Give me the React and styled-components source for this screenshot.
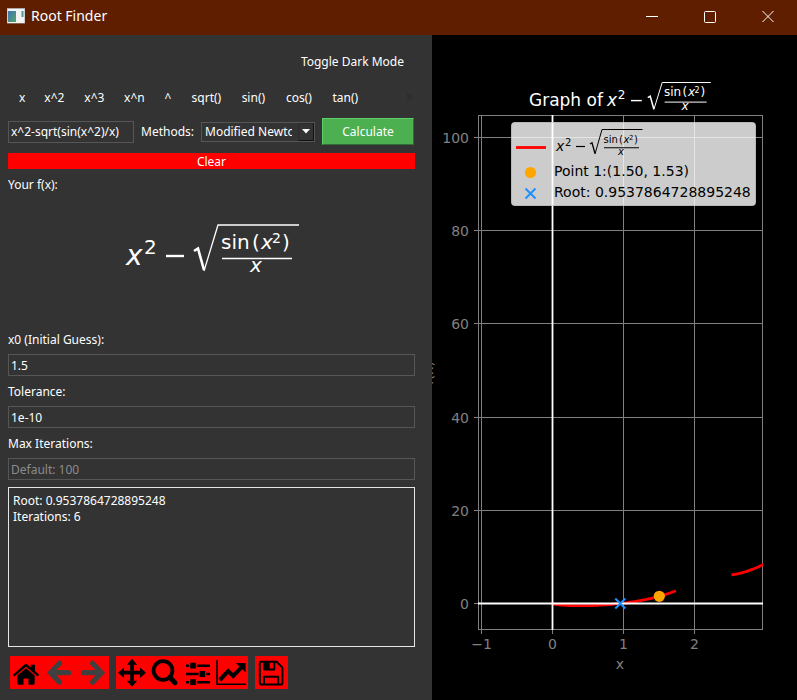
import React, { useState } from "react";
import styled, { createGlobalStyle } from "styled-components";

const GlobalStyle = createGlobalStyle`
  * { box-sizing: border-box; }
  html, body, #root { height: 100%; }
  body {
    margin: 0;
    background: #000;
    color: #fff;
    font: 12px/18px "Noto Sans", "Open Sans", sans-serif;
  }
  button, input, select, textarea { font: inherit; color: inherit; }
`;

const Window = styled.div`
  min-height: 100%;
  display: flex;
  flex-direction: column;
`;

const TitleBar = styled.header`
  height: 35px;
  flex: none;
  display: flex;
  align-items: center;
  background: #601e00;
  padding: 0 0 3px 7px;
`;

const AppName = styled.h1`
  flex: 1;
  margin: 0 0 0 6px;
  font-size: 14px;
  line-height: 20px;
  font-weight: 400;
`;

const CaptionButton = styled.button`
  width: 58px;
  height: 32px;
  padding: 0;
  border: 0;
  background: none;
  display: grid;
  place-items: center;
`;

const Body = styled.main`
  flex: 1;
  display: grid;
  grid-template-columns: 432fr 365fr;
`;

const Panel = styled.form`
  min-width: 0;
  background: #333;
  padding: 17px 17px 11px 8px;
  display: flex;
  flex-direction: column;
`;

const ToggleRow = styled.div`
  display: flex;
  justify-content: flex-end;
  padding-right: 11px;
`;

const FlatButton = styled.button`
  min-width: ${(p) => p.$width || 0}px;
  border: 0;
  padding: 0;
  background: none;
  line-height: 20px;
  white-space: nowrap;
`;

const FunctionRow = styled.div`
  display: flex;
  gap: 18px;
  margin-top: 16px;
  padding: 0 2px 0 11px;
`;

const More = styled.span`
  margin-left: auto;
  color: #2b2b2b;
  font-size: 14px;
  line-height: 16px;
`;

const EntryRow = styled.div`
  display: flex;
  align-items: center;
  gap: 7px;
  margin-top: 10px;
`;

const TextInput = styled.input`
  width: 100%;
  height: 22px;
  padding: 0 2px;
  border: 1px solid #565656;
  border-radius: 0;
  background: #333;
  outline: 0;
  &::placeholder { color: #8c8c8c; opacity: 1; }
`;

const ExpressionInput = styled(TextInput)`
  flex: 1;
  min-width: 0;
`;

const MethodLabel = styled.label`
  width: 53px;
`;

const SelectBox = styled.div`
  position: relative;
  width: 114px;
  height: 20px;
`;

const Select = styled.select`
  appearance: none;
  display: block;
  width: 100%;
  height: 100%;
  padding: 0 22px 0 3px;
  border: 1px solid #565656;
  border-radius: 0;
  background: #333;
  outline: 0;
`;

const SelectArrow = styled.span`
  position: absolute;
  top: 1px;
  right: 1px;
  width: 16px;
  height: 18px;
  display: grid;
  place-items: center;
  pointer-events: none;
  border: 1px solid;
  border-color: #2b2b2b #111 #111 #2b2b2b;
`;

const CalculateButton = styled.button`
  width: 92px;
  height: 27px;
  margin-right: 1px;
  padding: 0;
  border: 1px solid;
  border-color: #5fd068 #2f6f33 #2f6f33 #5fd068;
  background: #4caf50;
`;

const ClearButton = styled.button`
  height: 16px;
  margin: 8px 0 7px;
  padding: 1px 0 0;
  border: 0;
  background: #f00;
  line-height: 15px;
`;

const Preview = styled.figure`
  margin: 0;
  flex: none;
  height: 137px;
  display: flex;
  justify-content: center;
  padding-top: 24px;
`;

const FieldLabel = styled.label`
  display: block;
  margin-bottom: 5px;
`;

const Field = styled.div`
  margin-bottom: 7px;
`;

const Output = styled.textarea`
  display: block;
  flex: 1;
  min-height: 80px;
  width: 100%;
  padding: 5px 4px 4px;
  border: 1px solid #e6e6e6;
  border-radius: 0;
  background: #333;
  line-height: 16px;
  resize: none;
  outline: 0;
`;

const Toolbar = styled.div`
  display: flex;
  gap: 7px;
  margin: 9px 0 0 2px;
`;

const ToolGroup = styled.div`
  display: flex;
  background: #f00;
`;

const ToolButton = styled.button`
  width: 33px;
  height: 33px;
  padding: 0;
  border: 0;
  background: none;
  color: ${(p) => (p.disabled ? "#404040" : "#000")};
  svg { display: block; }
`;

const PlotPanel = styled.section`
  min-width: 0;
  overflow: hidden;
`;

const PlotSvg = styled.svg`
  display: block;
  width: 100%;
  overflow: hidden;
  font-family: "DejaVu Sans", sans-serif;
`;

const MathGroup = styled.g`
  font-family: "DejaVu Sans", sans-serif;
`;

/* x^2 - sqrt(sin(x^2)/x), with the baseline of the leading x at (x, y) */
function Formula({ x, y, k, color, bar = 40 * k }) {
  const main = Math.round(28 * k);
  const mid = Math.round(20 * k);
  const small = Math.round(14 * k);
  const px = (v) => x + v * k;
  const py = (v) => y + v * k;
  return (
    <MathGroup fill={color} stroke="none">
      <text x={px(0)} y={y} fontSize={main} fontStyle="italic">x</text>
      <text x={px(18)} y={py(-11)} fontSize={mid}>2</text>
      <path d={`M${px(40)} ${py(-9)}H${px(58)}`} stroke={color} strokeWidth={Math.max(1.2, 2.4 * k)} />
      <path
        d={`M${px(68)} ${py(-14)}L${px(72)} ${py(-16.5)}L${px(78)} ${py(5)}`}
        fill="none" stroke={color} strokeWidth={Math.max(1.3, 2.6 * k)}
      />
      <path
        d={`M${px(78)} ${py(6)}L${px(92)} ${y - bar}H${px(173)}`}
        fill="none" stroke={color} strokeWidth={Math.max(1, 1.3 * k)}
      />
      <text x={px(95)} y={py(-16)} fontSize={mid}>sin</text>
      <text x={px(126)} y={py(-16)} fontSize={mid}>(</text>
      <text x={px(135)} y={py(-16)} fontSize={mid} fontStyle="italic">x</text>
      <text x={px(146)} y={py(-22)} fontSize={small}>2</text>
      <text x={px(156)} y={py(-16)} fontSize={mid}>)</text>
      <path d={`M${px(96)} ${py(-6.5)}H${px(166)}`} stroke={color} strokeWidth={Math.max(1, 1.4 * k)} />
      <text x={px(124)} y={py(7)} fontSize={mid} fontStyle="italic">x</text>
    </MathGroup>
  );
}

const toX = (v) => 120.5 + 71 * v;
const toY = (v) => 568.5 - 4.66 * v;
const f = (v) => v * v - Math.sqrt(Math.max(0, Math.sin(v * v) / v));

function curve(from, to) {
  const points = [];
  for (let i = 0; i <= 60; i++) {
    const v = from + ((to - from) * i) / 60;
    points.push(`${toX(v).toFixed(2)},${toY(f(v)).toFixed(2)}`);
  }
  return points.join(" ");
}

const cross = (x, y) => `M${x - 5} ${y - 5}l10 10M${x + 5} ${y - 5}l-10 10`;

const xTicks = [[49.5, "−1"], [120.5, "0"], [191.5, "1"], [262.5, "2"]];
const yTicks = [[568.5, "0"], [475.5, "20"], [382.5, "40"], [288.5, "60"], [195.5, "80"], [102.5, "100"]];

function Plot() {
  return (
    <PlotSvg viewBox="0 0 365 665" role="img" aria-label="Graph of the function">
      <clipPath id="axes"><rect x="46" y="80" width="285" height="515" /></clipPath>
      <g stroke="#808080" fill="none">
        {xTicks.map(([x]) => <path key={x} d={`M${x} 80.5V599`} />)}
        {yTicks.map(([y]) => <path key={y} d={`M42 ${y}H330.5`} />)}
        <rect x="46.5" y="80.5" width="284" height="514" />
      </g>
      <g clipPath="url(#axes)" fill="none">
        <g stroke="#f00" strokeWidth="2.8" strokeLinecap="square">
          <polyline points={curve(0.01, 1.72)} />
          <polyline points={curve(2.54, 3.05)} />
        </g>
        <path d="M46 568.5H331M120.5 80V595" stroke="#fff" strokeWidth="1.8" />
      </g>
      <circle cx="227.3" cy="561.3" r="5.6" fill="#ffa500" />
      <path d={cross(188.3, 568.5)} stroke="#1e90ff" strokeWidth="2" />
      <g fill="#808080" fontSize="14">
        {xTicks.map(([x, t]) => <text key={t} x={x} y="614" textAnchor="middle">{t}</text>)}
        {yTicks.map(([y, t]) => <text key={t} x="37" y={y + 5} textAnchor="end">{t}</text>)}
        <text x="188" y="634" textAnchor="middle">x</text>
        <text transform="translate(1 338) rotate(-90)" textAnchor="middle">f(x)</text>
      </g>
      <text x="97" y="71" fontSize="17" fill="#fff">Graph of</text>
      <Formula x={175} y={71} k={0.6} color="#fff" bar={23.5} />
      <rect x="79.5" y="87.5" width="244" height="83" rx="3" fill="#fff" fillOpacity="0.8" stroke="#ccc" strokeOpacity="0.8" />
      <path d="M84 112.5H114" stroke="#f00" strokeWidth="2.8" />
      <Formula x={124} y={116} k={0.5} color="#000" bar={21.5} />
      <circle cx="98.5" cy="137.5" r="5.6" fill="#ffa500" />
      <path d={cross(98.5, 158.5)} stroke="#1e90ff" strokeWidth="2" />
      <g fill="#000" fontSize="14">
        <text x="122" y="141">Point 1:(1.50, 1.53)</text>
        <text x="122" y="162">Root: 0.9537864728895248</text>
      </g>
    </PlotSvg>
  );
}

const icons = {
  home: (
    <g fill="currentColor">
      <path d="M16 12.2 7.3 19.6V27q0 1.7 1.5 1.7h4.7v-6.2h5v6.2h4.7q1.5 0 1.5-1.7v-7.4z" />
      <path d="M14.6 8.6q1.4-1 2.8 0l3.4 2.9V8.8h4.2v6.3l4.1 3.7-1.4 1.7L16 10.8 4.3 20.5l-1.4-1.7z" />
    </g>
  ),
  left: <path d="M16.5 7.2 7.5 16.7l9 9.5M9 16.7h16.5" fill="none" stroke="currentColor" strokeWidth="5.2" strokeLinecap="round" strokeLinejoin="miter" />,
  right: <path d="M16.5 7.2 25.5 16.7l-9 9.5M24 16.7H7.5" fill="none" stroke="currentColor" strokeWidth="5.2" strokeLinecap="round" strokeLinejoin="miter" />,
  move: (
    <path
      d="M16 2.7l5.2 6h-3.3v6.1h6.1v-3.3l6 5.2-6 5.2v-3.3h-6.1v6.1h3.3l-5.2 6-5.2-6h3.3v-6.1H8v3.3l-6-5.2 6-5.2v3.3h6.1V8.7h-3.3z"
      fill="currentColor"
    />
  ),
  zoom: (
    <g fill="none" stroke="currentColor">
      <circle cx="14" cy="14.5" r="9.4" strokeWidth="3.8" />
      <path d="M20.8 21.3l5.2 5.4" strokeWidth="5" strokeLinecap="round" />
    </g>
  ),
  sliders: (
    <g fill="none" stroke="currentColor">
      <path d="M4 9.7h3.2M14.8 9.7H28M4 18h12.6M24.4 18H28M4 26.2h3.2M14.8 26.2H28" strokeWidth="2.4" />
      <path d="M8.2 9.7h5.6M17.6 18h5.6M8.2 26.2h5.6" strokeWidth="5.8" />
    </g>
  ),
  chart: (
    <g fill="none" stroke="currentColor">
      <path d="M2 4v24.2h29" strokeWidth="1.6" />
      <path d="M4.8 24l8.4-8.8 5 4.8 8.6-8.8" strokeWidth="4" />
      <path d="M21 7h9.6v9.6z" fill="currentColor" stroke="none" />
    </g>
  ),
  save: (
    <g fill="none" stroke="currentColor" strokeWidth="2" strokeLinejoin="round">
      <path d="M6 5.8h15.6l5.8 5.8v15.6q0 1.2-1.2 1.2H6q-1.2 0-1.2-1.2V7q0-1.2 1.2-1.2z" />
      <path d="M9.3 5.8v7.8h10V5.8M9 28.4v-7.6h14.2v7.6" />
      <path d="M9.3 6h5.4v7H9.3z" fill="currentColor" stroke="none" />
    </g>
  ),
};

const toolGroups = [
  [["Home", "home"], ["Back", "left", true], ["Forward", "right", true]],
  [["Pan", "move"], ["Zoom", "zoom"], ["Subplots", "sliders"], ["Customize", "chart"]],
  [["Save", "save"]],
];

const captionIcons = [
  ["Minimize", <path key="p" d="M0 6.5h12" />],
  ["Maximize", <rect key="p" x="0.5" y="1.5" width="11" height="11" rx="1" />],
  ["Close", <path key="p" d="M0.5 1l11 11M11.5 1l-11 11" />],
];

const functions = [
  ["x", 6], ["x^2", 22], ["x^3", 22], ["x^n", 22], ["^", 9],
  ["sqrt()", 32], ["sin()", 26], ["cos()", 29], ["tan()", 28],
];

export default function App() {
  const [expression, setExpression] = useState("x^2-sqrt(sin(x^2)/x)");
  return (
    <Window>
      <GlobalStyle />
      <TitleBar>
        <svg width="18" height="16" viewBox="0 0 18 16" aria-hidden="true">
          <defs>
            <linearGradient id="pane" x1="0" y1="0" x2="1" y2="1">
              <stop offset="0" stopColor="#3c74b0" />
              <stop offset="1" stopColor="#55a66c" />
            </linearGradient>
          </defs>
          <rect width="18" height="15.5" fill="#aaa" />
          <rect x="0.5" y="1" width="17" height="14" fill="#f3f3f3" />
          <rect x="1" y="3" width="8" height="11" fill="url(#pane)" />
          <rect x="14.5" y="3" width="2" height="6" fill="#4f9a8c" />
        </svg>
        <AppName>Root Finder</AppName>
        {captionIcons.map(([name, drawing]) => (
          <CaptionButton key={name} type="button" aria-label={name}>
            <svg width="12" height="13" fill="none" stroke="#fff">{drawing}</svg>
          </CaptionButton>
        ))}
      </TitleBar>
      <Body>
        <Panel onSubmit={(e) => e.preventDefault()}>
          <ToggleRow><FlatButton type="button">Toggle Dark Mode</FlatButton></ToggleRow>
          <FunctionRow>
            {functions.map(([name, width]) => (
              <FlatButton key={name} type="button" $width={width} onClick={() => setExpression(expression + name)}>
                {name}
              </FlatButton>
            ))}
            <More aria-hidden="true">»</More>
          </FunctionRow>
          <EntryRow>
            <ExpressionInput aria-label="Function" value={expression} onChange={(e) => setExpression(e.target.value)} />
            <MethodLabel htmlFor="method">Methods:</MethodLabel>
            <SelectBox>
              <Select id="method" defaultValue="Modified Newton">
                <option>Modified Newton</option>
              </Select>
              <SelectArrow>
                <svg width="8" height="5" aria-hidden="true"><path d="M0 0h8L4 4.5z" fill="#fff" /></svg>
              </SelectArrow>
            </SelectBox>
            <CalculateButton type="submit">Calculate</CalculateButton>
          </EntryRow>
          <ClearButton type="button" onClick={() => setExpression("")}>Clear</ClearButton>
          <div>Your f(x):</div>
          <Preview>
            <svg width="178" height="60" role="img" aria-label="x squared minus the root of sin of x squared over x">
              <Formula x={3} y={47} k={1} color="#fff" />
            </svg>
          </Preview>
          <Field>
            <FieldLabel htmlFor="guess">x0 (Initial Guess):</FieldLabel>
            <TextInput id="guess" defaultValue="1.5" />
          </Field>
          <Field>
            <FieldLabel htmlFor="tolerance">Tolerance:</FieldLabel>
            <TextInput id="tolerance" defaultValue="1e-10" />
          </Field>
          <Field>
            <FieldLabel htmlFor="iterations">Max Iterations:</FieldLabel>
            <TextInput id="iterations" placeholder="Default: 100" />
          </Field>
          <Output aria-label="Result" readOnly value={"Root: 0.9537864728895248\nIterations: 6"} />
          <Toolbar>
            {toolGroups.map((group) => (
              <ToolGroup key={group[0][0]}>
                {group.map(([name, icon, disabled]) => (
                  <ToolButton key={name} type="button" aria-label={name} disabled={disabled}>
                    <svg width="33" height="33">{icons[icon]}</svg>
                  </ToolButton>
                ))}
              </ToolGroup>
            ))}
          </Toolbar>
        </Panel>
        <PlotPanel><Plot /></PlotPanel>
      </Body>
    </Window>
  );
}
